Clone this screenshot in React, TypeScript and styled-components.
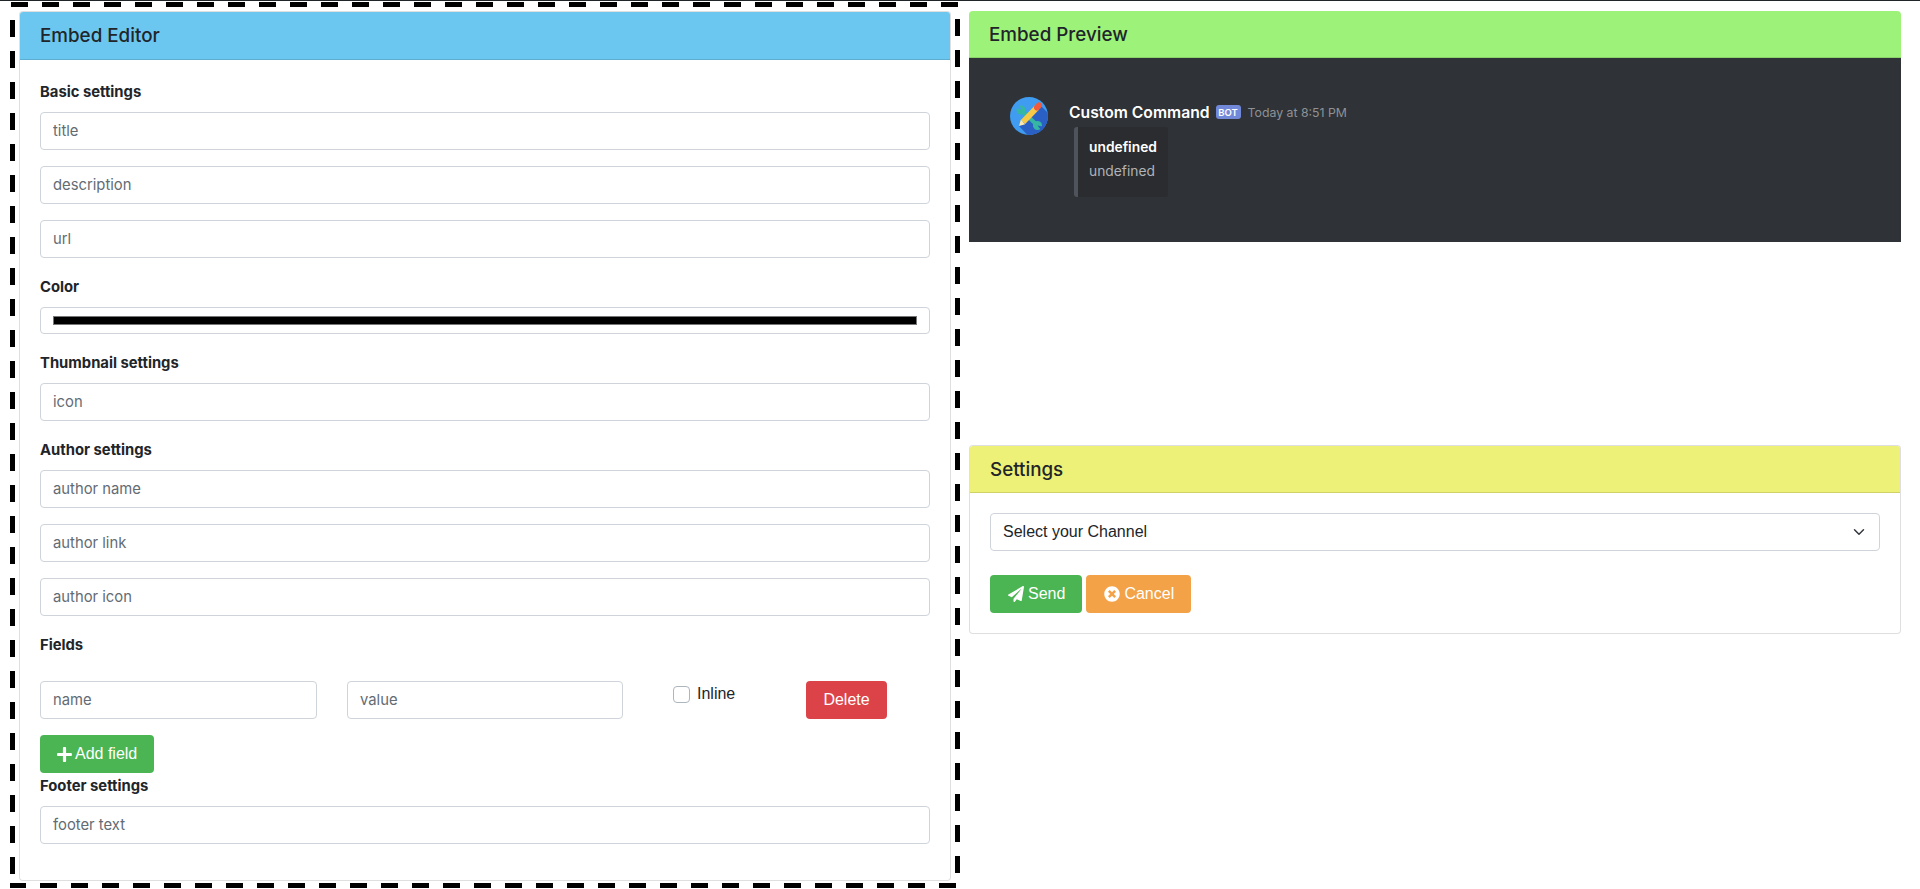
import React from 'react';
import styled, { createGlobalStyle } from 'styled-components';
import { FaPaperPlane, FaPlus, FaTimesCircle } from 'react-icons/fa';

const GlobalStyle = createGlobalStyle`
  html, body {
    margin: 0;
    padding: 0;
    background: #fff;
    overflow: hidden;
  }
  * {
    box-sizing: border-box;
  }
`;

const SANS = `Inter, "Liberation Sans", sans-serif`;
const HELVETICA = `"Liberation Sans", Arial, sans-serif`;

const dash = (dir: string) =>
  `repeating-linear-gradient(${dir}, #000 0 17px, transparent 17px 31px)`;

const Page = styled.div`
  width: 1920px;
  height: 889px;
  border-top: 1px solid #212529;
  display: grid;
  grid-template-columns: 960px 960px;
  color: #212529;
  font-family: ${SANS};
`;

// the dashes are longer than a css dashed border draws them, so they are painted
const EditorFrame = styled.div`
  margin: 1px 0 0 10px;
  padding: 9px 9px 7px 9px;
  height: 886px;
  background-image: ${dash('90deg')}, ${dash('90deg')}, ${dash('180deg')}, ${dash('180deg')};
  background-repeat: no-repeat;
  background-size: 949px 5px, 951px 5px, 5px 868px, 5px 868px;
  background-position: 1px 0, -1px 100%, 0 18px, 100% 17px;
`;

const SideColumn = styled.div`
  padding: 10px 19px 0 9px;
  display: flex;
  flex-direction: column;
`;

const Card = styled.section`
  background: #fff;
  border: 1px solid rgba(0, 0, 0, 0.125);
  border-radius: 4px;
  overflow: hidden;
`;

const EditorCard = styled(Card)`
  height: 870px;
`;

const PreviewCard = styled(Card)`
  border: 0;
  height: 231px;
  border-radius: 4px 4px 0 0;
`;

const SettingsCard = styled(Card)`
  margin-top: 203px;
  height: 189px;
`;

const CardHeader = styled.header<{ $bg: string; $h?: number }>`
  display: flex;
  align-items: center;
  height: ${p => p.$h ?? 47}px;
  padding: 0 20px;
  background: ${p => p.$bg};
  border-bottom: 1px solid rgba(0, 0, 0, 0.125);
  font-size: 18.8px;
  font-weight: 500;
  color: #212529;
`;

const CardBody = styled.div`
  padding: 20px;
`;

const SectionLabel = styled.label<{ $top?: number }>`
  display: block;
  padding-top: ${p => p.$top ?? 0}px;
  margin-bottom: 8px;
  font-size: 14.8px;
  font-weight: 700;
  line-height: 24px;
  color: #212529;
`;

const TextInput = styled.input`
  display: block;
  width: 100%;
  height: 38px;
  margin-bottom: 16px;
  padding: 6px 12px;
  border: 1px solid #ced4da;
  border-radius: 4px;
  background: #fff;
  font-family: ${SANS};
  font-size: 14.8px;
  color: #495057;
  outline: none;
  &::placeholder {
    color: #636b73;
    opacity: 1;
  }
`;

const FieldInput = styled(TextInput)`
  margin-bottom: 0;
`;

const ColorInput = styled.input`
  display: block;
  width: 100%;
  height: 27px;
  margin-bottom: 17px;
  padding: 8px 12px;
  border: 1px solid #ced4da;
  border-radius: 4px;
  background: #fff;
  appearance: none;
  &::-webkit-color-swatch-wrapper {
    padding: 0;
  }
  &::-webkit-color-swatch {
    border: 1px solid #777;
    border-radius: 0;
    background: #000;
  }
`;

const FieldRow = styled.div`
  display: grid;
  grid-template-columns: 277px 276px 123px auto;
  column-gap: 30px;
  margin: 24px 0 16px;
  align-items: start;
`;

const CheckLabel = styled.label`
  display: flex;
  align-items: center;
  gap: 7px;
  padding: 0 0 0 20px;
  height: 24px;
  margin-top: 1px;
  font-family: ${HELVETICA};
  font-size: 16px;
  color: #212529;
`;

const CheckBox = styled.input`
  appearance: none;
  width: 17px;
  height: 17px;
  margin: 0;
  border: 1px solid #adb5bd;
  border-radius: 4px;
  background: #fff;
`;

const Button = styled.button<{ $bg: string }>`
  display: inline-flex;
  align-items: center;
  justify-content: center;
  gap: 4px;
  height: 38px;
  padding: 0 17px 0 18px;
  border: 0;
  border-radius: 4px;
  background: ${p => p.$bg};
  color: #fff;
  font-family: ${HELVETICA};
  font-size: 16px;
  svg {
    font-size: 16px;
  }
`;

const AddButton = styled(Button)`
  gap: 2px;
  padding: 0 17px 0 16px;
  svg {
    font-size: 17px;
  }
`;

const DeleteButton = styled(Button)`
  width: 81px;
  padding: 0;
`;

const ChannelSelect = styled.select`
  display: block;
  width: 100%;
  height: 38px;
  padding: 5px 12px 7px;
  border: 1px solid #ced4da;
  border-radius: 4px;
  appearance: none;
  font-family: ${HELVETICA};
  font-size: 16px;
  color: #212529;
  background: #fff
    url("data:image/svg+xml,%3csvg xmlns='http://www.w3.org/2000/svg' viewBox='0 0 16 16'%3e%3cpath fill='none' stroke='%23343a40' stroke-linecap='round' stroke-linejoin='round' stroke-width='2' d='M2 5l6 6 6-6'/%3e%3c/svg%3e")
    no-repeat right 13px center / 14px 12px;
`;

const ButtonRow = styled.div`
  display: flex;
  gap: 4px;
  margin-top: 24px;
`;

const PreviewPane = styled.div`
  display: flex;
  gap: 21px;
  height: 184px;
  padding: 39px 41px;
  background: #2f3236;
`;

const Message = styled.div`
  display: flex;
  flex-direction: column;
`;

const MessageHead = styled.div`
  display: flex;
  align-items: center;
  height: 30px;
`;

const AuthorName = styled.span`
  font-size: 15.7px;
  font-weight: 600;
  color: #fff;
`;

const BotBadge = styled.span`
  display: inline-flex;
  align-items: center;
  justify-content: center;
  width: 25px;
  height: 14px;
  margin-left: 6px;
  border-radius: 3px;
  background: #7289da;
  color: #fff;
  font-size: 9.5px;
  font-weight: 600;
`;

const TimeStamp = styled.span`
  margin-left: 7px;
  font-size: 12.3px;
  color: #8e9297;
`;

const Embed = styled.div`
  width: 94px;
  height: 70px;
  margin-left: 5px;
  padding: 8px 11px;
  background: #2a2c2f;
  border-left: 4px solid #4f545c;
  border-radius: 3px;
  font-size: 13.8px;
`;

const EmbedTitle = styled.div`
  height: 24px;
  line-height: 24px;
  font-weight: 600;
  color: #fff;
`;

const EmbedText = styled.div`
  height: 24px;
  line-height: 24px;
  color: #b0b3b8;
`;

const Avatar = () => (
  <svg width="38" height="38" viewBox="0 0 38 38" style={{ flex: 'none' }}>
    <defs>
      <clipPath id="avatar-clip">
        <circle cx="19" cy="19" r="19" />
      </clipPath>
    </defs>
    <circle cx="19" cy="19" r="19" fill="#3f9cf0" />
    <g clipPath="url(#avatar-clip)">
      <path d="M9 29 L30 8 L46 24 L25 46 Z" fill="#2a5fc4" />
    </g>
    <path d="M11 13 L27 28" stroke="#35b7a4" strokeWidth="4" />
    <circle cx="11" cy="13" r="4.5" fill="#35b7a4" />
    <circle cx="27.5" cy="28.5" r="4.5" fill="#35b7a4" />
    <path d="M9 8 L12 13 L7 11 Z" fill="#3f9cf0" />
    <path d="M31 33 L27.5 28.5 L32.5 29.5 Z" fill="#2a5fc4" />
    <path d="M13 25 L27 10.5" stroke="#f7c948" strokeWidth="6" />
    <path d="M9 29 L10.8 22.8 L15.2 27.2 Z" fill="#fbe7b0" />
    <path d="M27 10.5 L29 8.4" stroke="#ef5b3c" strokeWidth="6" strokeLinecap="round" />
  </svg>
);

export default function App() {
  return (
    <>
      <GlobalStyle />
      <Page>
        <EditorFrame>
          <EditorCard>
            <CardHeader $bg="#6cc7f0" $h={48}>Embed Editor</CardHeader>
            <CardBody>
              <SectionLabel>Basic settings</SectionLabel>
              <TextInput placeholder="title" />
              <TextInput placeholder="description" />
              <TextInput placeholder="url" />
              <SectionLabel $top={1}>Color</SectionLabel>
              <ColorInput type="color" defaultValue="#000000" />
              <SectionLabel>Thumbnail settings</SectionLabel>
              <TextInput placeholder="icon" />
              <SectionLabel $top={1}>Author settings</SectionLabel>
              <TextInput placeholder="author name" />
              <TextInput placeholder="author link" />
              <TextInput placeholder="author icon" />
              <SectionLabel $top={1}>Fields</SectionLabel>
              <FieldRow>
                <FieldInput placeholder="name" />
                <FieldInput placeholder="value" />
                <CheckLabel>
                  <CheckBox type="checkbox" />
                  Inline
                </CheckLabel>
                <DeleteButton $bg="#dc4349">Delete</DeleteButton>
              </FieldRow>
              <AddButton $bg="#4ab552">
                <FaPlus />
                Add field
              </AddButton>
              <SectionLabel $top={1}>Footer settings</SectionLabel>
              <TextInput placeholder="footer text" />
            </CardBody>
          </EditorCard>
        </EditorFrame>
        <SideColumn>
          <PreviewCard>
            <CardHeader $bg="#9df27a">Embed Preview</CardHeader>
            <PreviewPane>
              <Avatar />
              <Message>
                <MessageHead>
                  <AuthorName>Custom Command</AuthorName>
                  <BotBadge>BOT</BotBadge>
                  <TimeStamp>Today at 8:51 PM</TimeStamp>
                </MessageHead>
                <Embed>
                  <EmbedTitle>undefined</EmbedTitle>
                  <EmbedText>undefined</EmbedText>
                </Embed>
              </Message>
            </PreviewPane>
          </PreviewCard>
          <SettingsCard>
            <CardHeader $bg="#eef177">Settings</CardHeader>
            <CardBody>
              <ChannelSelect defaultValue="">
                <option value="">Select your Channel</option>
              </ChannelSelect>
              <ButtonRow>
                <Button $bg="#4ab552">
                  <FaPaperPlane />
                  Send
                </Button>
                <Button $bg="#f3a247">
                  <FaTimesCircle />
                  Cancel
                </Button>
              </ButtonRow>
            </CardBody>
          </SettingsCard>
        </SideColumn>
      </Page>
    </>
  );
}
